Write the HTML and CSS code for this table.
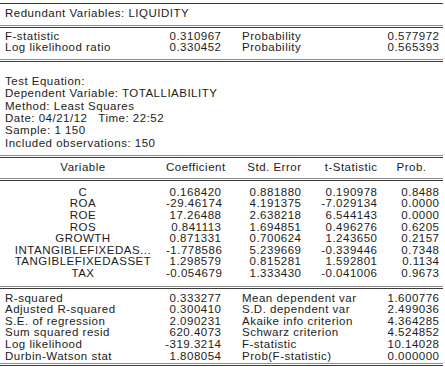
FILE: index.html
```html
<!DOCTYPE html>
<html>
<head>
<meta charset="utf-8">
<link rel="stylesheet" href="styles.css">
</head>
<body>
<div class="output">
  <div class="rule-single"></div>
  <div class="title">Redundant Variables: LIQUIDITY</div>
  <div class="rule-double"></div>
  <div class="pairs test">
    <span class="lbl">F-statistic</span><span class="num">0.310967</span><span class="lbl2">Probability</span><span class="num">0.577972</span>
    <span class="lbl">Log likelihood ratio</span><span class="num">0.330452</span><span class="lbl2">Probability</span><span class="num">0.565393</span>
  </div>
  <div class="rule-double"></div>
  <div class="info">
    <div>Test Equation:</div>
    <div>Dependent Variable: TOTALLIABILITY</div>
    <div>Method: Least Squares</div>
    <div>Date: 04/21/12&nbsp;&nbsp; Time: 22:52</div>
    <div>Sample: 1 150</div>
    <div>Included observations: 150</div>
  </div>
  <div class="rule-double"></div>
  <div class="coef head">
    <span class="var">Variable</span><span class="num">Coefficient</span><span class="num">Std. Error</span><span class="num">t-Statistic</span><span class="num prob-h">Prob.</span>
  </div>
  <div class="rule-double"></div>
  <div class="coef body">
    <span class="var">C</span><span class="num">0.168420</span><span class="num">0.881880</span><span class="num">0.190978</span><span class="num">0.8488</span>
    <span class="var">ROA</span><span class="num">-29.46174</span><span class="num">4.191375</span><span class="num">-7.029134</span><span class="num">0.0000</span>
    <span class="var">ROE</span><span class="num">17.26488</span><span class="num">2.638218</span><span class="num">6.544143</span><span class="num">0.0000</span>
    <span class="var">ROS</span><span class="num">0.841113</span><span class="num">1.694851</span><span class="num">0.496276</span><span class="num">0.6205</span>
    <span class="var">GROWTH</span><span class="num">0.871331</span><span class="num">0.700624</span><span class="num">1.243650</span><span class="num">0.2157</span>
    <span class="var">INTANGIBLEFIXEDAS...</span><span class="num">-1.778586</span><span class="num">5.239669</span><span class="num">-0.339446</span><span class="num">0.7348</span>
    <span class="var">TANGIBLEFIXEDASSET</span><span class="num">1.298579</span><span class="num">0.815281</span><span class="num">1.592801</span><span class="num">0.1134</span>
    <span class="var">TAX</span><span class="num">-0.054679</span><span class="num">1.333430</span><span class="num">-0.041006</span><span class="num">0.9673</span>
  </div>
  <div class="rule-double"></div>
  <div class="pairs stats">
    <span class="lbl">R-squared</span><span class="num">0.333277</span><span class="lbl2">Mean dependent var</span><span class="num">1.600776</span>
    <span class="lbl">Adjusted R-squared</span><span class="num">0.300410</span><span class="lbl2">S.D. dependent var</span><span class="num">2.499036</span>
    <span class="lbl">S.E. of regression</span><span class="num">2.090231</span><span class="lbl2">Akaike info criterion</span><span class="num">4.364285</span>
    <span class="lbl">Sum squared resid</span><span class="num">620.4073</span><span class="lbl2">Schwarz criterion</span><span class="num">4.524852</span>
    <span class="lbl">Log likelihood</span><span class="num">-319.3214</span><span class="lbl2">F-statistic</span><span class="num">10.14028</span>
    <span class="lbl">Durbin-Watson stat</span><span class="num">1.808054</span><span class="lbl2">Prob(F-statistic)</span><span class="num">0.000000</span>
  </div>
  <div class="rule-double"></div>
</div>
</body>
</html>
```

FILE: styles.css
```css
html, body {
  margin: 0;
  padding: 0;
  background: #ffffff;
}

.output {
  width: 443px;
  padding-top: 3px;
  font-family: "Liberation Sans", Arial, sans-serif;
  font-size: 11.5px;
  letter-spacing: 0.5px;
  line-height: 11.6px;
  color: #1c1c1c;
}

.rule-single {
  border-top: 1px solid #3a3a3a;
}

.rule-double {
  height: 1px;
  border-top: 1px solid #8c8c8c;
  border-bottom: 1px solid #3a3a3a;
}

.title {
  padding: 4px 0 5px 5px;
}

.pairs {
  display: grid;
  grid-template-columns: 116px 100px 156px 62px;
  padding-left: 5px;
  padding-right: 4px;
}

.pairs.test {
  padding-top: 3px;
  padding-bottom: 5px;
}

.pairs.stats {
  padding-top: 4px;
  padding-bottom: 1px;
}

.lbl, .lbl2 {
  white-space: nowrap;
}

.lbl2 {
  padding-left: 21px;
}

.num {
  text-align: right;
  white-space: nowrap;
  margin-right: -0.5px;
}

.info {
  padding: 13px 0 6px 5px;
  line-height: 12.4px;
}

.coef {
  display: grid;
  grid-template-columns: 166px 55px 80px 76px 62px;
}

.coef.head {
  padding: 4px 0 4px 0;
}

.coef.body {
  padding: 6px 0 6px 0;
}

.var {
  text-align: center;
  white-space: nowrap;
}

.prob-h {
  padding-right: 13px;
}
```
